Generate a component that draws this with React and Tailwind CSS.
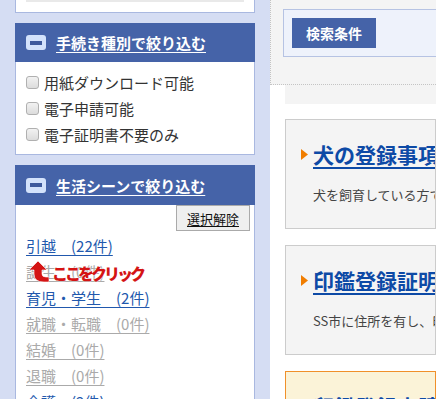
import React from "react";

const FONT = { fontFamily: '"Noto Sans CJK JP", "Noto Sans", sans-serif' };

function MinusIcon() {
  return (
    <div className="w-[20px] h-[15px] rounded-[3px] bg-[#d3e2fb] flex items-center justify-center shrink-0">
      <div className="w-[12px] h-[4px] bg-[#3e5a9c]" />
    </div>
  );
}

function PanelHeader({ title, h }) {
  return (
    <div className={`bg-[#4563a8] flex items-center pl-[11px] gap-[10px] ${h}`}>
      <MinusIcon />
      <span className="text-white font-bold text-[15px] underline underline-offset-[3px] leading-none">
        {title}
      </span>
    </div>
  );
}

function Check({ label }) {
  return (
    <div className="flex items-center h-[26px]">
      <span className="w-[13px] h-[13px] rounded-[3px] border border-[#b0b0b0] bg-gradient-to-b from-[#f2f2f2] to-[#dcdcdc] shrink-0" />
      <span className="ml-[5px] text-[15px] text-[#333] leading-none">{label}</span>
    </div>
  );
}

const links = [
  { t: "引越　(22件)", on: true },
  { t: "誕生　(0件)", on: false },
  { t: "育児・学生　(2件)", on: true },
  { t: "就職・転職　(0件)", on: false },
  { t: "結婚　(0件)", on: false },
  { t: "退職　(0件)", on: false },
  { t: "介護　(2件)", on: true },
];

function Card({ title, desc, accent }) {
  return (
    <div
      className={`shrink-0 border pl-[15px] pt-[18px] pb-[23px] overflow-hidden whitespace-nowrap ${
        accent ? "border-[#f0902a] bg-[#fbf3d8]" : "border-[#cccccc] bg-[#f4f4f4]"
      }`}
    >
      <div className="flex items-center h-[32px]">
        <svg width="7" height="11" viewBox="0 0 7 11" className="shrink-0">
          <polygon points="0,0 7,5.5 0,11" fill="#f07d00" />
        </svg>
        <span className="ml-[5px] text-[21px] font-bold text-[#0d4aa6] underline underline-offset-[4px] decoration-2 leading-none">
          {title}
        </span>
      </div>
      <div className="mt-[15px] pl-[12px] text-[13px] leading-[20px] text-[#444]">{desc}</div>
    </div>
  );
}

export default function App() {
  return (
    <div style={FONT} className="w-[436px] h-[399px] overflow-hidden bg-[#d5ddf3] flex items-start">
      {/* left column */}
      <div className="w-[240px] ml-[15px] shrink-0">
        <div className="h-[13px] bg-white border-x border-b border-[#a9b8e0] px-[10px]">
          <div className="h-[2px] bg-[#e9e9e9]" />
        </div>

        <div className="mt-[10px]">
          <PanelHeader title="手続き種別で絞り込む" h="h-[39px]" />
          <div className="bg-white border-x border-b border-[#a9b8e0] pl-[10px] pt-[7px] pb-[7px]">
            <Check label="用紙ダウンロード可能" />
            <Check label="電子申請可能" />
            <Check label="電子証明書不要のみ" />
          </div>
        </div>

        <div className="mt-[10px]">
          <PanelHeader title="生活シーンで絞り込む" h="h-[40px]" />
          <div className="relative bg-white border-x border-[#a9b8e0] h-[300px]">
            <div className="flex justify-end pr-[4px]">
              <button className="w-[74px] h-[26px] bg-[#efefef] border border-[#aaaaaa] text-[13px] text-[#111] underline underline-offset-[2px] leading-none">
                選択解除
              </button>
            </div>
            <div className="pl-[10px] pt-[1px]">
              {links.map((l) => (
                <div key={l.t} className="h-[26px] flex items-center">
                  <span
                    className={`text-[15px] leading-none underline underline-offset-[3px] ${
                      l.on ? "text-[#2158ad]" : "text-[#aaaaaa]"
                    }`}
                  >
                    {l.t}
                  </span>
                </div>
              ))}
            </div>
            {/* overlay annotation */}
            <div className="absolute left-[13px] top-[56px] flex items-center">
              <svg width="20" height="22" viewBox="0 0 20 22">
                <path
                  d="M0 9 L9 0 L18 9 L13 9 L13 13 Q13 16 17 16 L20 16 L20 21 L15 21 Q5 21 5 13 L5 9 Z"
                  fill="#d41414"
                  stroke="#ffffff"
                  strokeWidth="0.6"
                />
              </svg>
              <span className="ml-[3px] mt-[2px] text-[16px] font-black text-[#d41414] tracking-[-3px] leading-none [text-shadow:0_0_2px_#fff]">
                ここをクリック
              </span>
            </div>
          </div>
        </div>
      </div>

      {/* right column */}
      <div className="ml-[15px] flex-1 min-w-0 h-[399px]">
        <div className="h-[85px] bg-[#f4f4f4] border-l border-b border-dotted border-[#c4c4c4] pl-[12px] pt-[9px]">
          <div className="h-[48px] bg-[#eef2fb] border border-[#b6c3e3] border-r-0 pl-[8px] pt-[8px]">
            <div className="w-[84px] h-[30px] bg-[#4563a8] flex items-center justify-center text-white font-bold text-[14px]">
              検索条件
            </div>
          </div>
        </div>
        <div className="h-[314px] bg-white pl-[15px] overflow-hidden">
          <div className="h-[19px] bg-[#f4f4f4]" />
          <div className="mt-[15px] flex flex-col gap-[16px]">
            <Card title="犬の登録事項変更届" desc="犬を飼育している方で、登録事項に変更があった場合" />
            <Card title="印鑑登録証明書の交付" desc="SS市に住所を有し、印鑑登録をしている方" />
            <Card title="印鑑登録申請" desc="SS市に住所を有する方" accent />
          </div>
        </div>
      </div>
    </div>
  );
}
